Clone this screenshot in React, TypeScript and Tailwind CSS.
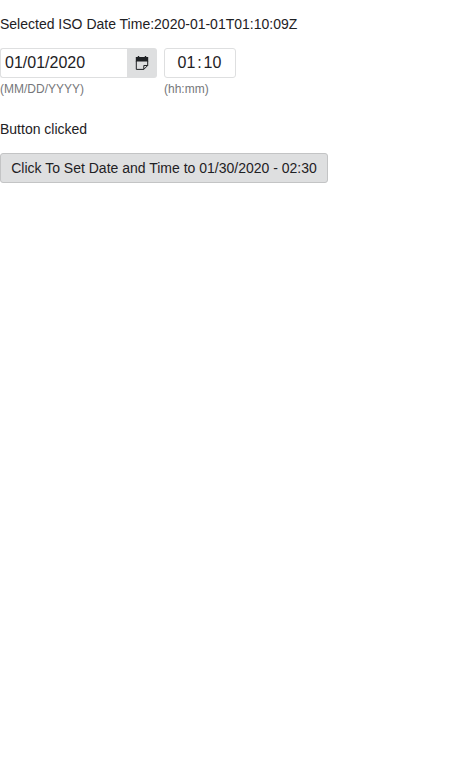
export default function App() {
  return (
    <main className="flex min-h-screen flex-col items-start bg-white pt-[14px] text-[14px] leading-5 text-[#1e2124] [font-family:'Liberation_Sans',Arial,sans-serif]">
      <p>Selected ISO Date Time:2020-01-01T01:10:09Z</p>
      <div className="mt-[14px] flex gap-[7px]">
        <div className="w-[157px]">
          <div className="flex h-[30px]">
            <input
              aria-label="Date"
              defaultValue="01/01/2020"
              className="h-full w-[127px] rounded-l-[3px] border border-r-0 border-[#dedfe0] bg-white pr-1 pl-1 text-[16px] outline-none"
            />
            <button aria-label="Open calendar" className="flex w-[30px] items-center justify-center rounded-r-[3px] bg-[#dedfe0]">
              <svg width="14" height="14" viewBox="0 0 14 14" fill="none">
                <path d="M.8 1h2V0h1.4v1h5.6V0h1.4v1h2v4.4H.8z" fill="#1e2124" />
                <path d="M1.3 5v8.4h7.5l3.9-3.9V5M8.8 13.4V9.5h3.9" stroke="#1e2124" />
              </svg>
            </button>
          </div>
          <div className="mt-[3px] text-[12px] leading-4 text-[#76777a]">(MM/DD/YYYY)</div>
        </div>
        <div className="w-[72px]">
          <div className="flex h-[30px] items-center rounded-[3px] border border-[#dedfe0] pl-[12.5px] text-[16px]">
            <span className="w-[18px]">01</span>
            <span className="w-[8px] text-center">:</span>
            <span>10</span>
          </div>
          <div className="mt-[3px] text-[12px] leading-4 text-[#76777a]">(hh:mm)</div>
        </div>
      </div>
      <p className="mt-[22px]">Button clicked</p>
      <button className="mt-[14px] h-[30px] w-[328px] rounded-[3px] border border-[#c3c4c5] bg-[#dedfe0] whitespace-nowrap">
        Click To Set Date and Time to 01/30/2020 - 02:30
      </button>
    </main>
  );
}
